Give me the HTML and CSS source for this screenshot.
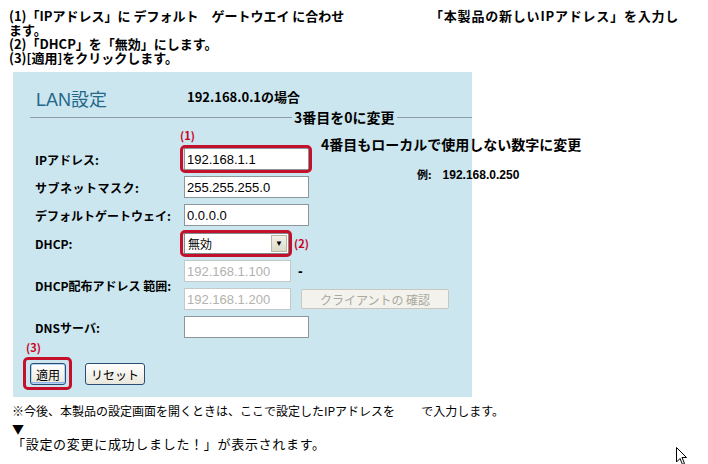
FILE: index.html
```html
<!DOCTYPE html>
<html lang="ja">
<head>
    <meta charset="UTF-8">
    <title>LAN設定</title>
    <link rel="stylesheet" href="styles.css">
</head>
<body>
    <div class="intro">
        <div class="intro-first">
            <span class="intro-left">(1)「IPアドレス」に デフォルト　ゲートウエイ に合わせ</span>
            <span class="intro-right">「本製品の新しいIPアドレス」を入力し</span>
        </div>
        <p>ます。</p>
        <p>(2)「DHCP」を「無効」にします。</p>
        <p>(3)[適用]をクリックします。</p>
    </div>

    <div class="panel">
        <div class="panel-head">
            <h1>LAN設定</h1>
            <span class="case">192.168.0.1の場合</span>
        </div>
        <div class="rule"></div>

        <span class="note-3rd">3番目を0に変更</span>
        <span class="mark mark-1">(1)</span>
        <span class="note-4th">4番目もローカルで使用しない数字に変更</span>
        <span class="note-ex">例:<span class="ex-ip">192.168.0.250</span></span>

        <div class="form">
            <label>IPアドレス:</label>
            <div class="cell"><span class="hl hl-ip"><input class="field" value="192.168.1.1"></span></div>

            <label class="wide">サブネットマスク:</label>
            <div class="cell"><input class="field" value="255.255.255.0"></div>

            <label>デフォルトゲートウェイ:</label>
            <div class="cell"><input class="field" value="0.0.0.0"></div>

            <label>DHCP:</label>
            <div class="cell">
                <span class="hl hl-select">
                    <span class="select"><span class="select-text">無効</span><span class="select-btn">▼</span></span>
                </span>
                <span class="mark mark-2">(2)</span>
            </div>

            <label class="range-label">DHCP配布アドレス 範囲:</label>
            <div class="cell"><input class="field short" value="192.168.1.100" disabled><span class="dash">-</span></div>
            <div class="cell"><input class="field short" value="192.168.1.200" disabled><button class="btn-off" disabled>クライアントの 確認</button></div>

            <label>DNSサーバ:</label>
            <div class="cell"><input class="field" value=""></div>
        </div>

        <div class="actions">
            <span class="mark">(3)</span>
            <div class="buttons">
                <span class="hl hl-apply"><button class="btn focus">適用</button></span>
                <button class="btn">リセット</button>
            </div>
        </div>
    </div>

    <p class="note">※今後、本製品の設定画面を開くときは、ここで設定したIPアドレスを<span class="gap"></span>で入力します。</p>
    <p class="arrow">▼</p>
    <p class="done">「設定の変更に成功しました！」が表示されます。</p>

    <svg class="cursor" width="13" height="20" viewBox="0 0 13 20">
        <path d="M1.5 1.5 L1.5 16 L5 12.5 L7.5 18.5 L9.5 17.5 L7 11.5 L11.5 11.5 Z" fill="#fff" stroke="#000" stroke-width="1"/>
    </svg>
</body>
</html>
```

FILE: styles.css
```css
body {
    margin: 0;
    width: 708px;
    height: 464px;
    overflow: hidden;
    position: relative;
    background: #ffffff;
    color: #000000;
    font-family: "Liberation Sans", "Noto Sans CJK JP", sans-serif;
}
p {
    margin: 0;
}
.intro {
    padding: 9px 0 0 9px;
    font-family: "Noto Sans CJK JP", sans-serif;
    font-size: 13px;
    font-weight: bold;
    line-height: 14px;
}
.intro-first {
    display: flex;
    white-space: nowrap;
}
.intro-left {
    width: 421px;
}
.intro-right {
    letter-spacing: 0.8px;
}
.panel {
    position: relative;
    box-sizing: border-box;
    width: 459px;
    height: 325px;
    margin: 7px 0 0 13px;
    padding: 14px 0 0 22px;
    background: #cbe6ee;
}
.panel-head {
    display: flex;
    align-items: center;
    height: 24px;
}
.panel-head h1 {
    width: 151px;
    margin: 0 0 0 1px;
    font-family: "Liberation Sans", "Noto Sans CJK JP", sans-serif;
    font-size: 18px;
    font-weight: normal;
    color: #23688a;
}
.case {
    font-family: "Noto Sans CJK JP", sans-serif;
    font-size: 13px;
    font-weight: bold;
    margin-top: -4px;
}
.rule {
    height: 1px;
    margin: 7px 0 0 -5px;
    background: #8f9ea4;
}
.note-3rd,
.note-4th {
    position: absolute;
    font-family: "Noto Sans CJK JP", sans-serif;
    font-size: 14px;
    font-weight: bold;
    line-height: 16px;
    white-space: nowrap;
}
.note-3rd {
    left: 279px;
    top: 37px;
    padding: 0 2px;
    background: #cbe6ee;
}
.note-4th {
    left: 308px;
    top: 64px;
}
.note-ex {
    position: absolute;
    left: 404px;
    top: 94px;
    font-family: "Noto Sans CJK JP", sans-serif;
    font-size: 11px;
    font-weight: bold;
    white-space: nowrap;
}
.ex-ip {
    margin-left: 11px;
    font-family: "Liberation Sans", sans-serif;
    font-size: 12px;
}
.mark {
    font-family: "Noto Sans CJK JP", sans-serif;
    font-size: 11px;
    font-weight: bold;
    line-height: 14px;
    color: #cc0022;
}
.mark-1 {
    position: absolute;
    left: 167px;
    top: 56px;
}
.mark-2 {
    margin-left: 5px;
}
.form {
    display: grid;
    grid-template-columns: 149px auto;
    grid-auto-rows: 22px;
    row-gap: 6px;
    align-items: center;
    margin-top: 30px;
}
.form label {
    font-family: "Noto Sans CJK JP", sans-serif;
    font-size: 12px;
    font-weight: bold;
    white-space: nowrap;
}
.form label.wide {
    letter-spacing: 0.5px;
}
.form .range-label {
    grid-row: span 2;
    grid-column: 1;
}
.cell {
    display: flex;
    align-items: center;
    height: 22px;
}
.field {
    box-sizing: border-box;
    width: 125px;
    height: 22px;
    margin: 0;
    padding: 0 2px;
    border: 1px solid #8c969c;
    background: #ffffff;
    font-family: "Liberation Sans", sans-serif;
    font-size: 13px;
    color: #000000;
}
.field.short {
    width: 107px;
}
.field:disabled {
    color: #b2b2ae;
    border-color: #c3c8c9;
}
.dash {
    margin-left: 7px;
    font-weight: bold;
    font-size: 14px;
}
.hl {
    position: relative;
    display: inline-flex;
}
.hl::after {
    content: "";
    position: absolute;
    border: 3px solid #c5102c;
    border-radius: 5px;
}
.hl-ip::after {
    inset: -3px -3px -3px -4px;
}
.hl-select::after {
    inset: -3px -3px -3px -4px;
}
.hl-apply::after {
    inset: -6px -6px -5px -7px;
}
.select {
    box-sizing: border-box;
    display: flex;
    align-items: center;
    width: 105px;
    height: 21px;
    padding: 1px;
    border: 1px solid #7f8c92;
    background: #ffffff;
}
.select-text {
    flex: 1;
    padding-left: 2px;
    font-family: "Noto Sans CJK JP", sans-serif;
    font-size: 12px;
}
.select-btn {
    box-sizing: border-box;
    width: 16px;
    height: 17px;
    border: 1px solid #b9b7a6;
    background: linear-gradient(#f3f2ea, #dcdac9);
    font-size: 8px;
    line-height: 15px;
    text-align: center;
}
.btn-off {
    box-sizing: border-box;
    width: 148px;
    height: 20px;
    margin-left: 10px;
    border: 1px solid #c8c8c0;
    border-radius: 2px;
    background: #f3f2ec;
    color: #aaa99e;
    font-family: "Noto Sans CJK JP", sans-serif;
    font-size: 12px;
    padding: 0;
}
.actions {
    margin-left: -9px;
}
.buttons {
    display: flex;
    align-items: center;
    gap: 19px;
    margin: 7px 0 0 4px;
}
.btn {
    box-sizing: border-box;
    height: 22px;
    padding: 0 5px;
    border: 1px solid #2a4c74;
    border-radius: 3px;
    background: linear-gradient(#ffffff, #e9e7dc);
    font-family: "Noto Sans CJK JP", sans-serif;
    font-size: 12px;
    color: #000000;
}
.btn.focus {
    width: 36px;
    padding: 0;
    box-shadow: inset 0 0 0 1px #b8d2f2, inset 0 -1px 0 1px #8fb2e8;
}
.note {
    margin: 6px 0 0 12px;
    font-family: "Noto Sans CJK JP", sans-serif;
    font-size: 12px;
    line-height: 16px;
    white-space: nowrap;
}
.gap {
    display: inline-block;
    width: 26px;
}
.arrow {
    margin: 3px 0 0 12px;
    font-family: "Noto Sans CJK JP", sans-serif;
    font-size: 12px;
    line-height: 13px;
}
.done {
    margin-left: 12px;
    font-family: "Noto Sans CJK JP", sans-serif;
    font-size: 13px;
    line-height: 17px;
    letter-spacing: 0.7px;
}
.cursor {
    position: absolute;
    left: 675px;
    top: 446px;
}
```
